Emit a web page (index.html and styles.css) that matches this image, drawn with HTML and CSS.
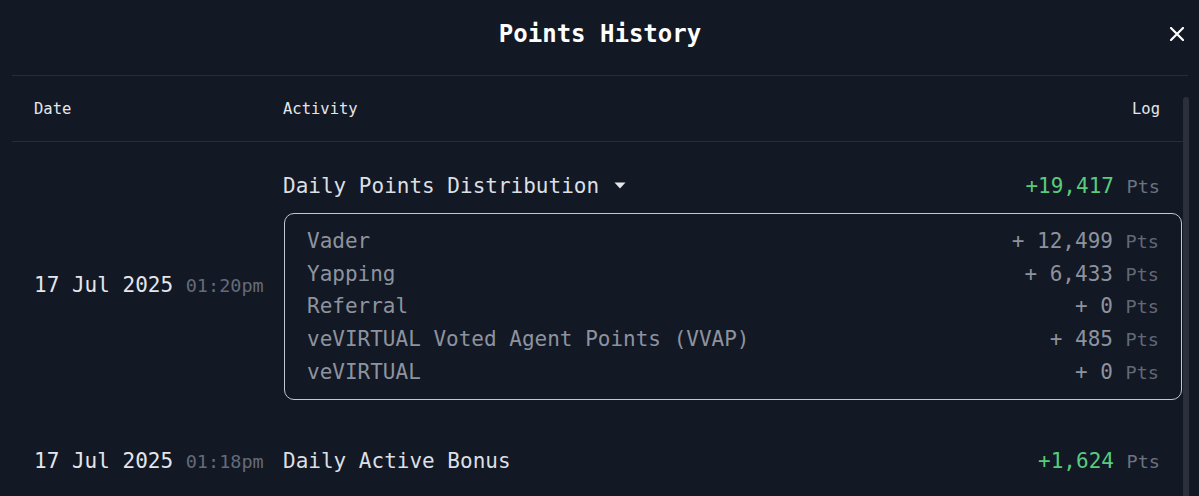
FILE: index.html
```html
<!DOCTYPE html>
<html lang="en">
<head>
    <meta charset="UTF-8">
    <meta name="viewport" content="width=device-width, initial-scale=1.0">
    <title>Points History</title>
    <link rel="stylesheet" href="styles.css">
</head>
<body>
    <div class="modal">
        <header class="modal-head">
            <h2>Points History</h2>
            <button class="close" aria-label="Close">
                <svg width="14" height="14" viewBox="0 0 14 14"><path d="M1 1L13 13M13 1L1 13" stroke="#fff" stroke-width="2.2" stroke-linecap="round"/></svg>
            </button>
        </header>

        <div class="modal-body">
            <div class="table">
                <div class="thead">
                    <span>Date</span>
                    <span>Activity</span>
                    <span class="log">Log</span>
                </div>

                <div class="row first">
                    <div class="date">17 Jul 2025 <span class="time">01:20pm</span></div>
                    <div class="activity">
                        <div class="line">
                            <span class="name">Daily Points Distribution<svg class="caret" width="12" height="7" viewBox="0 0 12 7"><path d="M0.5 0.5H11.5L6 6.5Z" fill="#e4e6eb"/></svg></span>
                            <span class="gain">+19,417 <small>Pts</small></span>
                        </div>
                        <div class="breakdown">
                            <div class="item"><span>Vader</span><span>+ 12,499 <small>Pts</small></span></div>
                            <div class="item"><span>Yapping</span><span>+ 6,433 <small>Pts</small></span></div>
                            <div class="item"><span>Referral</span><span>+ 0 <small>Pts</small></span></div>
                            <div class="item"><span>veVIRTUAL Voted Agent Points (VVAP)</span><span>+ 485 <small>Pts</small></span></div>
                            <div class="item"><span>veVIRTUAL</span><span>+ 0 <small>Pts</small></span></div>
                        </div>
                    </div>
                </div>

                <div class="row">
                    <div class="date">17 Jul 2025 <span class="time">01:18pm</span></div>
                    <div class="activity">
                        <div class="line">
                            <span class="name">Daily Active Bonus</span>
                            <span class="gain">+1,624 <small>Pts</small></span>
                        </div>
                    </div>
                </div>
            </div>
            <div class="scrollbar"><div class="thumb"></div></div>
        </div>
    </div>
</body>
</html>
```

FILE: styles.css
```css
body {
    margin: 0;
    background: #131825;
    font-family: "DejaVu Sans Mono", "Liberation Mono", monospace;
    color: #e4e6eb;
    overflow: hidden;
}
.modal {
    height: 496px;
}
.modal-head {
    position: relative;
    height: 68px;
    padding-bottom: 7px;
    margin: 0 11px 0 12px;
    border-bottom: 1px solid #272c39;
    display: flex;
    align-items: center;
    justify-content: center;
}
.modal-head h2 {
    margin: 0;
    font-size: 24px;
    font-weight: bold;
    color: #fff;
}
.close {
    position: absolute;
    right: 4px;
    top: 27px;
    background: none;
    border: none;
    padding: 0;
    cursor: pointer;
    line-height: 0;
}
.modal-body {
    display: flex;
    margin-left: 12px;
}
.table {
    flex: 1;
}
.scrollbar {
    width: 6px;
    margin-right: 10px;
    padding-top: 21px;
}
.thumb {
    height: 420px;
    background: #2a2f3b;
    border-radius: 3px;
}
.thead {
    display: grid;
    grid-template-columns: 249px 1fr auto;
    align-items: center;
    height: 65px;
    padding: 0 23px 0 22px;
    border-bottom: 1px solid #272c39;
    font-size: 15.5px;
    color: #e4e6eb;
}
.row {
    display: grid;
    grid-template-columns: 249px 1fr;
    align-items: center;
    padding: 20px 0 20px 22px;
}
.row.first {
    padding-top: 29px;
    padding-bottom: 26px;
}
.date {
    font-size: 21px;
    color: #e4e6eb;
    white-space: nowrap;
}
.time {
    font-size: 18.5px;
    color: #646b78;
}
.line {
    display: flex;
    justify-content: space-between;
    align-items: center;
    height: 30px;
    padding-right: 23px;
    font-size: 21px;
}
.name {
    color: #dcdfe4;
    display: inline-flex;
    align-items: center;
}
.caret {
    margin-left: 15px;
    margin-top: -1px;
}
.gain {
    color: #58cc7c;
}
small {
    font-size: 18.5px;
    color: #6b7280;
}
.breakdown {
    margin: 12px 1px 0 1px;
    padding: 11px 22px 11px 22px;
    border: 1.5px solid #c3c7cf;
    border-radius: 10px;
    font-size: 21px;
    color: #8d939e;
}
.item {
    display: flex;
    justify-content: space-between;
    align-items: center;
    height: 32.6px;
}
.item small {
    color: #626975;
}
```
